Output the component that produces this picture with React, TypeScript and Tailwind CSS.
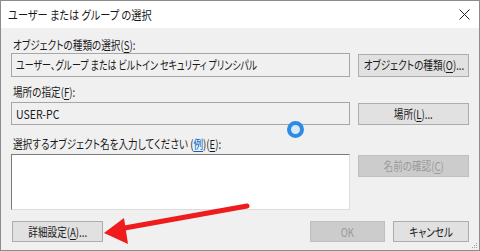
import React from 'react';

const font = "font-['Meiryo_UI','Noto_Sans_CJK_JP',sans-serif] [font-feature-settings:'palt'] text-[12px]";

const T = ({ children, s = 'scale-x-[0.8]', o = 'origin-left' }: { children: React.ReactNode; s?: string; o?: string }) => (
  <span className={`inline-block whitespace-nowrap ${s} ${o}`}>{children}</span>
);

function Btn({ children, disabled, className = '' }: { children: React.ReactNode; disabled?: boolean; className?: string }) {
  return (
    <div
      className={`shrink-0 whitespace-nowrap flex items-center justify-center border ${
        disabled ? 'bg-[#cccccc] border-[#bfbfbf] text-[#9a9a9a]' : 'bg-[#e1e1e1] border-[#adadad] text-[#1a1a1a]'
      } ${className}`}
    >
      <T o="origin-center">{children}</T>
    </div>
  );
}

const U = ({ c }: { c: string }) => <span className="underline underline-offset-2">{c}</span>;

export default function App() {
  return (
    <div className={`relative w-[480px] h-[251px] border border-[#8c8c8c] bg-[#f0f0f0] flex flex-col text-[#1a1a1a] ${font}`}>
      {/* title bar */}
      <div className="h-[27px] bg-white flex items-center justify-between pl-[7px] pr-[7px]">
        <T s="scale-x-[0.85]">ユーザー または グループ の選択</T>
        <span className="w-[16px] h-[16px] flex items-center justify-center">
          <svg width="11" height="11" viewBox="0 0 11 11">
            <path d="M0.5 0.5L10.5 10.5M10.5 0.5L0.5 10.5" stroke="#222" strokeWidth="1" />
          </svg>
        </span>
      </div>

      <div className="flex-1 px-[10px] pt-[9px] flex flex-col">
        <div className="h-[16px] leading-[16px] pl-[2px]">
          <T>オブジェクトの種類の選択(<U c="S" />):</T>
        </div>
        <div className="flex items-center gap-[8px]">
          <div className="w-[339px] shrink-0 h-[24px] border border-[#a6a6a6] bg-[#f0f0f0] flex items-center pl-[4px]">
            <T s="scale-x-[0.75]">ユーザー、グループ または ビルトイン セキュリティ プリンシパル</T>
          </div>
          <Btn className="w-[111px] h-[23px]">
            オブジェクトの種類(<U c="O" />)...
          </Btn>
        </div>

        <div className="h-[16px] leading-[16px] pl-[2px] mt-[7px]">
          <T>場所の指定(<U c="F" />):</T>
        </div>
        <div className="flex items-center gap-[8px] mt-[2px]">
          <div className="w-[339px] shrink-0 h-[23px] border border-[#a6a6a6] bg-[#f0f0f0] flex items-center pl-[4px]">
            <T s="scale-x-[0.88]">USER-PC</T>
          </div>
          <Btn className="w-[111px] h-[22px]">
            場所(<U c="L" />)...
          </Btn>
        </div>

        <div className="h-[16px] leading-[16px] pl-[2px] mt-[11px]">
          <T>
            選択するオブジェクト名を入力してください (<span className="text-[#0066cc] underline underline-offset-2">例</span>)(<U c="E" />):
          </T>
        </div>
        <div className="flex items-start gap-[8px] mt-[2px]">
          <div className="w-[339px] shrink-0 h-[56px] bg-white border border-t-[#7a7a7a] border-l-[#7a7a7a] border-r-[#dcdcdc] border-b-[#dcdcdc]" />
          <Btn disabled className="w-[111px] h-[22px] mt-[1px]">
            名前の確認(<U c="C" />)
          </Btn>
        </div>

        <div className="flex items-center mt-[11px] pl-[1px]">
          <Btn className="w-[91px] h-[21px]">
            詳細設定(<U c="A" />)...
          </Btn>
          <div className="flex-1" />
          <Btn disabled className="w-[75px] h-[21px]">OK</Btn>
          <Btn className="w-[76px] h-[21px] ml-[8px]">キャンセル</Btn>
        </div>
      </div>

      {/* resize grip */}
      <div className="absolute right-[2px] bottom-[2px] grid grid-cols-3 gap-[1px]">
        {[0, 0, 1, 0, 1, 1, 1, 1, 1].map((v, i) => (
          <span key={i} className={`w-[1px] h-[1px] ${v ? 'bg-[#a0a0a0]' : ''}`} />
        ))}
      </div>

      {/* busy spinner */}
      <div className="absolute left-[286px] top-[120px] w-[17px] h-[17px] rounded-full border-[4px] border-[#2b8ce6] bg-[#dbe9f7]" />

      {/* red arrow */}
      <svg className="absolute left-0 top-0 pointer-events-none" width="480" height="251">
        <line x1="246" y1="205" x2="118" y2="228" stroke="#ee1c1c" strokeWidth="5" strokeLinecap="round" />
        <polygon points="103,232 123,217 127,243" fill="#ee1c1c" />
      </svg>
    </div>
  );
}
